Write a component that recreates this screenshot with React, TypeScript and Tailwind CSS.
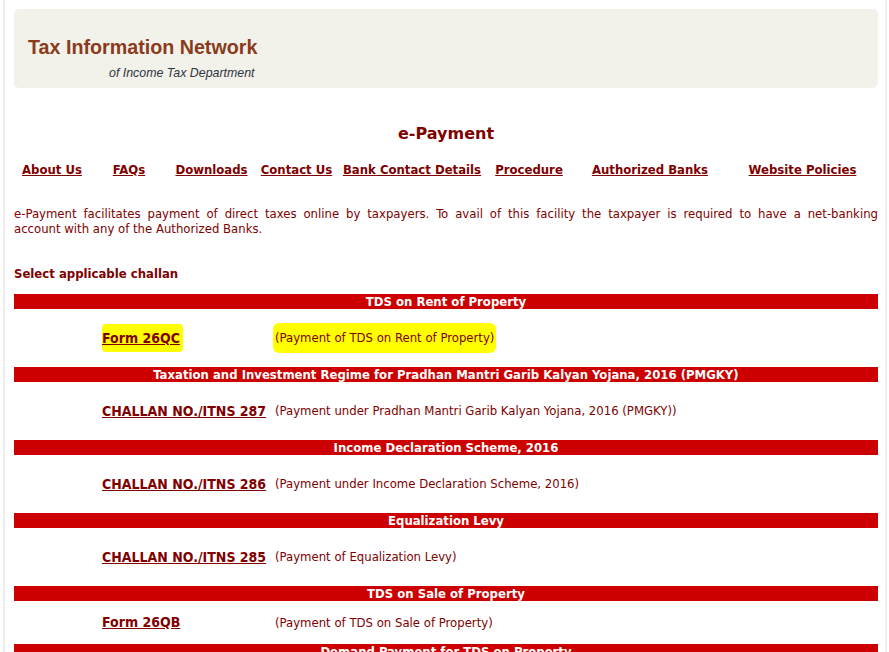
const navLinks = [
  { label: "About Us", w: "w-[76px]" },
  { label: "FAQs", w: "w-[78px]" },
  { label: "Downloads", w: "w-[87px]" },
  { label: "Contact Us", w: "w-[83px]" },
  { label: "Bank Contact Details", w: "w-[148px]" },
  { label: "Procedure", w: "w-[86px]" },
  { label: "Authorized Banks", w: "w-[156px]" },
  { label: "Website Policies", w: "w-[149px]" },
];

type Challan = {
  heading: string;
  link: string;
  desc: string;
  highlight?: boolean;
  short?: boolean;
};

const challans: Challan[] = [
  {
    heading: "TDS on Rent of Property",
    link: "Form 26QC",
    desc: "(Payment of TDS on Rent of Property)",
    highlight: true,
  },
  {
    heading:
      "Taxation and Investment Regime for Pradhan Mantri Garib Kalyan Yojana, 2016 (PMGKY)",
    link: "CHALLAN NO./ITNS 287",
    desc: "(Payment under Pradhan Mantri Garib Kalyan Yojana, 2016 (PMGKY))",
  },
  {
    heading: "Income Declaration Scheme, 2016",
    link: "CHALLAN NO./ITNS 286",
    desc: "(Payment under Income Declaration Scheme, 2016)",
  },
  {
    heading: "Equalization Levy",
    link: "CHALLAN NO./ITNS 285",
    desc: "(Payment of Equalization Levy)",
  },
  {
    heading: "TDS on Sale of Property",
    link: "Form 26QB",
    desc: "(Payment of TDS on Sale of Property)",
    short: true,
  },
];

const Bar = ({ text }: { text: string }) => (
  <div className="h-[15px] bg-[#cc0000] text-center text-[13px] leading-[15px] font-bold text-white">
    {text}
  </div>
);

export default function App() {
  return (
    <div className="w-[889px] h-[652px] overflow-hidden bg-white font-['DejaVu_Sans_Condensed','DejaVu_Sans',sans-serif] text-[#800000]">
      <div className="ml-[3px] w-[884px] min-h-[652px] border-x-2 border-[#efefef] pl-[9px] pr-[7px] pt-[9px]">
        {/* header */}
        <div className="h-[79px] rounded-[5px] bg-[#f2f1ea] pl-[14px] pt-[26px] font-['Liberation_Sans',Arial,sans-serif]">
          <div className="text-[19.7px] leading-[24px] font-bold text-[#8a3b1c]">
            Tax Information Network
          </div>
          <div className="mt-[7px] pl-[81px] text-[12.4px] leading-[14px] italic text-[#2f3540]">
            of Income Tax Department
          </div>
        </div>

        <h1 className="mt-[36px] text-center font-['DejaVu_Sans',sans-serif] text-[16px] leading-[20px] font-bold text-[#800000]">
          e-Payment
        </h1>

        <nav className="mt-[13px] flex">
          {navLinks.map((n) => (
            <div key={n.label} className={`${n.w} text-center`}>
              <a href="#" className="text-[13px] leading-[16px] font-bold underline">
                {n.label}
              </a>
            </div>
          ))}
        </nav>

        <p className="mt-[25px] text-[13px] leading-[15px]">
          <span className="block text-justify [text-align-last:justify]">
            e-Payment facilitates payment of direct taxes online by taxpayers. To avail of this
            facility the taxpayer is required to have a net-banking
          </span>
          <span className="block">account with any of the Authorized Banks.</span>
        </p>

        <div className="mt-[30px] text-[13px] leading-[16px] font-bold">
          Select applicable challan
        </div>

        <div className="mt-[12px]">
          {challans.map((c) => (
            <div key={c.heading}>
              <Bar text={c.heading} />
              <div
                className={`flex items-center pl-[88px] text-[13px] leading-[16px] ${
                  c.short ? "h-[43px]" : "h-[58px]"
                }`}
              >
                <div className="w-[173px]">
                  <a
                    href="#"
                    className={`text-[14px] font-bold underline ${
                      c.highlight ? "rounded-[4px] bg-[#ffff00] py-[6px] pr-[3px]" : ""
                    }`}
                  >
                    {c.link}
                  </a>
                </div>
                <span
                  className={
                    c.highlight
                      ? "-ml-[2px] rounded-[6px] bg-[#ffff00] px-[2px] py-[7px]"
                      : ""
                  }
                >
                  {c.desc}
                </span>
              </div>
            </div>
          ))}
          <Bar text="Demand Payment for TDS on Property" />
        </div>
      </div>
    </div>
  );
}
